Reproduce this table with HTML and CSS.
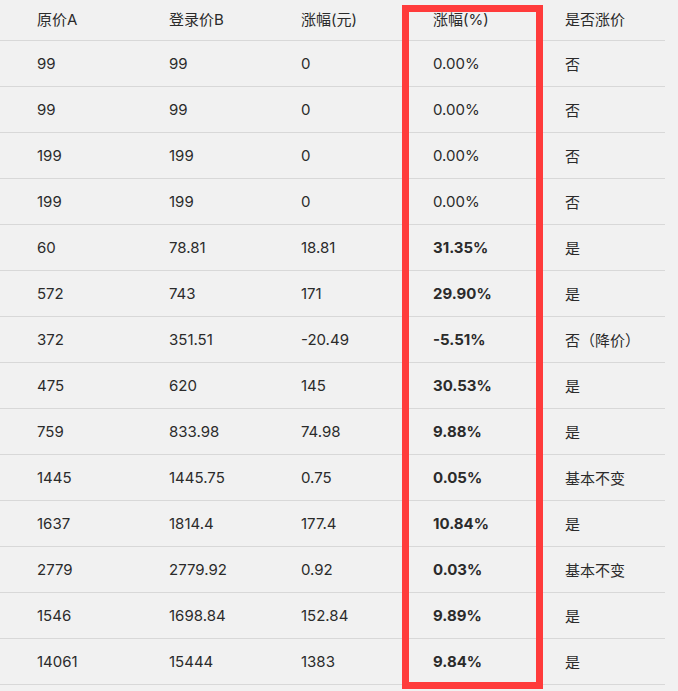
FILE: index.html
```html
<!DOCTYPE html>
<html lang="zh">
<head>
<meta charset="utf-8">
<title>涨幅表</title>
<link rel="stylesheet" href="styles.css">
</head>
<body>
<div class="wrap">
  <div class="table">
    <div class="row head"><div class="c">原价A</div><div class="c">登录价B</div><div class="c">涨幅(元)</div><div class="c">涨幅(%)</div><div class="c">是否涨价</div></div>
    <div class="row"><div class="c">99</div><div class="c">99</div><div class="c">0</div><div class="c">0.00%</div><div class="c">否</div></div>
    <div class="row"><div class="c">99</div><div class="c">99</div><div class="c">0</div><div class="c">0.00%</div><div class="c">否</div></div>
    <div class="row"><div class="c">199</div><div class="c">199</div><div class="c">0</div><div class="c">0.00%</div><div class="c">否</div></div>
    <div class="row"><div class="c">199</div><div class="c">199</div><div class="c">0</div><div class="c">0.00%</div><div class="c">否</div></div>
    <div class="row"><div class="c">60</div><div class="c">78.81</div><div class="c">18.81</div><div class="c b">31.35%</div><div class="c">是</div></div>
    <div class="row"><div class="c">572</div><div class="c">743</div><div class="c">171</div><div class="c b">29.90%</div><div class="c">是</div></div>
    <div class="row"><div class="c">372</div><div class="c">351.51</div><div class="c">-20.49</div><div class="c b">-5.51%</div><div class="c">否（降价）</div></div>
    <div class="row"><div class="c">475</div><div class="c">620</div><div class="c">145</div><div class="c b">30.53%</div><div class="c">是</div></div>
    <div class="row"><div class="c">759</div><div class="c">833.98</div><div class="c">74.98</div><div class="c b">9.88%</div><div class="c">是</div></div>
    <div class="row"><div class="c">1445</div><div class="c">1445.75</div><div class="c">0.75</div><div class="c b">0.05%</div><div class="c">基本不变</div></div>
    <div class="row"><div class="c">1637</div><div class="c">1814.4</div><div class="c">177.4</div><div class="c b">10.84%</div><div class="c">是</div></div>
    <div class="row"><div class="c">2779</div><div class="c">2779.92</div><div class="c">0.92</div><div class="c b">0.03%</div><div class="c">基本不变</div></div>
    <div class="row"><div class="c">1546</div><div class="c">1698.84</div><div class="c">152.84</div><div class="c b">9.89%</div><div class="c">是</div></div>
    <div class="row"><div class="c">14061</div><div class="c">15444</div><div class="c">1383</div><div class="c b">9.84%</div><div class="c">是</div></div>
  </div>
  <div class="highlight"></div>
</div>
</body>
</html>
```
FILE: styles.css
```css
html, body {
  margin: 0;
  padding: 0;
  background: #f1f1f1;
}
body {
  font-family: Inter, "Noto Sans CJK SC", sans-serif;
  font-size: 15px;
  color: #2b2b2b;
}
.wrap {
  position: relative;
  width: 678px;
  height: 691px;
  overflow: hidden;
}
.table {
  width: 665px;
}
.row {
  display: flex;
  height: 46px;
  box-sizing: border-box;
  padding-left: 5px;
  border-bottom: 1px solid #d8d8d8;
  align-items: center;
}
.row.head {
  height: 41px;
  padding-bottom: 4px;
}
.c {
  width: 132px;
  padding-left: 32px;
  box-sizing: border-box;
  white-space: nowrap;
}
.b {
  font-weight: 700;
}
.highlight {
  position: absolute;
  left: 402px;
  top: 5px;
  width: 141px;
  height: 684px;
  box-sizing: border-box;
  border: 7px solid #ff3b3b;
}
```
